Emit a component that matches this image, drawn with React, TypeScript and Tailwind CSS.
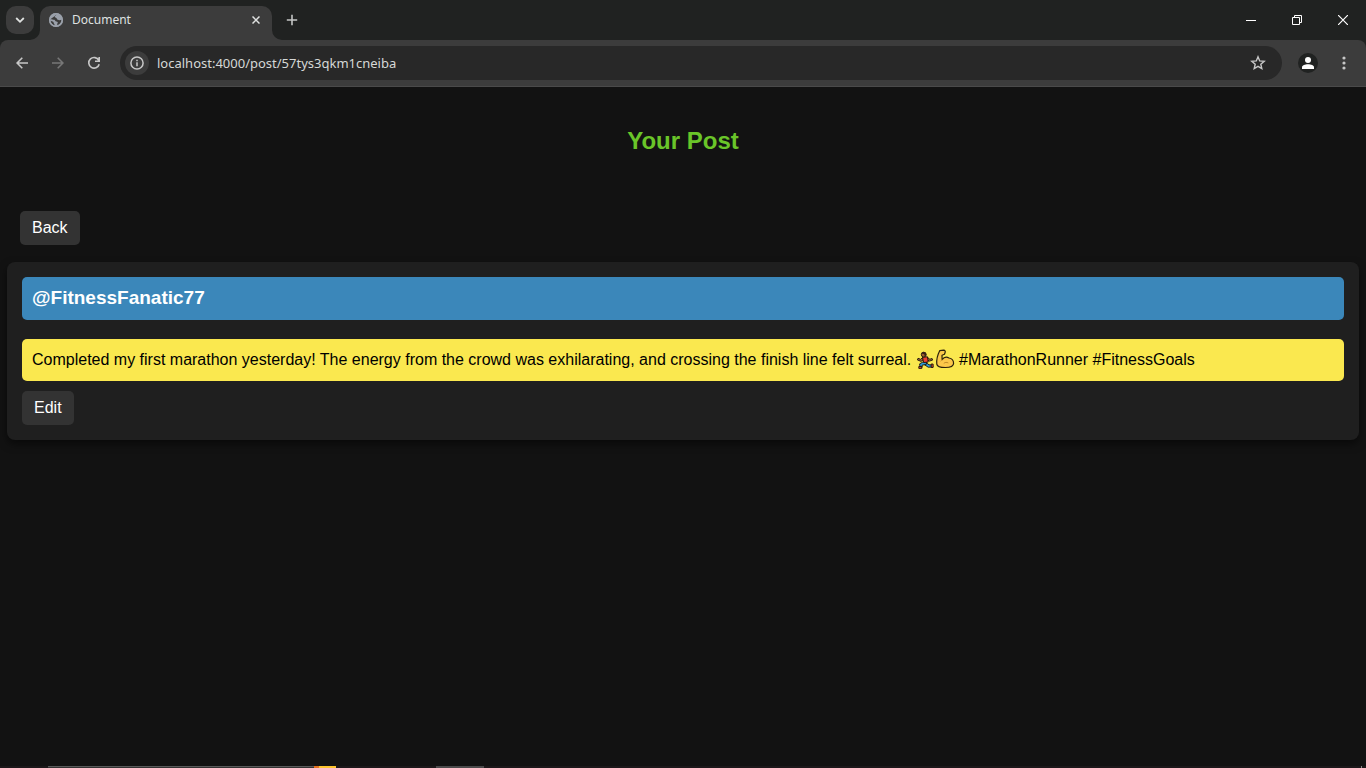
import React from "react";

function TabStrip() {
  return (
    <header className="flex h-10 items-start bg-[#202221] text-[#dfe1e0]">
      <button aria-label="Search tabs" className="ml-1.5 mt-1.5 flex size-7 items-center justify-center rounded-[10px] bg-[#3c3c3c]">
        <svg width="10" height="8" viewBox="0 0 10 8" fill="none" stroke="currentColor" strokeWidth="1.8">
          <path d="M1.2 2l3.8 3.8L8.8 2" />
        </svg>
      </button>
      <div className="flex h-10 items-start pl-1.5">
        <div className="relative flex h-[34px] w-[232px] items-center self-end rounded-t-[10px] bg-[#3c3c3c] pl-2 pr-2.5 pb-1.5">
          <svg className="absolute -left-2.5 bottom-0" width="10" height="10" viewBox="0 0 10 10">
            <path d="M10 0v10H0A10 10 0 0 0 10 0z" fill="#3c3c3c" />
          </svg>
          <svg className="absolute -right-2.5 bottom-0" width="10" height="10" viewBox="0 0 10 10">
            <path d="M0 0v10h10A10 10 0 0 1 0 0z" fill="#3c3c3c" />
          </svg>
          <svg width="16" height="16" viewBox="0 0 16 16">
            <circle cx="8" cy="8" r="7" fill="#9aa0aa" />
            <path
              d="M9 2.600C6.800 3.200 6.300 4.800 7.300 5.600c1 .7 1.300.4 1.600 1.400.4 1 1.600.8 2.300 1.200l2.400-.4c-.1 2.600-1.900 4.600-4 5.400-.8-.8-.4-1.600.1-2.200.4-.8-.3-1.300-1.300-1.500-1.300-.2-1.300-1.400-2.200-1.700C5 7.400 4 7.600 2.500 7.200l-.1 1.500c.9.6 2 .3 2.800 1 .6.6.4 1.300.9 2l.9 1.900A5.800 5.800 0 0 1 2.300 7.200z"
              fill="#3c3c3c"
            />
            <circle cx="8" cy="8" r="6.300" fill="none" stroke="#9aa0aa" strokeWidth="1.400" />
          </svg>
          <span className="ml-2 flex-1 font-['Noto_Sans',sans-serif] text-[12px] leading-4">Document</span>
          <button aria-label="Close tab" className="flex size-3 items-center justify-center">
            <svg width="8" height="8" viewBox="0 0 8 8" stroke="currentColor" strokeWidth="1.500">
              <path d="M.5.5l7 7M7.500.5l-7 7" />
            </svg>
          </button>
        </div>
        <button aria-label="New tab" className="ml-3.5 mt-3.5 flex size-3 items-center justify-center text-[#c4c6c5]">
          <svg width="12" height="12" viewBox="0 0 12 12" stroke="currentColor" strokeWidth="1.600">
            <path d="M6 .8v10.400M.8 6h10.400" />
          </svg>
        </button>
      </div>
      <div className="ml-auto flex text-white">
        <button aria-label="Minimize" className="flex h-10 w-[46px] items-center justify-center">
          <svg width="10" height="10" viewBox="0 0 10 10" stroke="currentColor">
            <path d="M0 5.500h10" />
          </svg>
        </button>
        <button aria-label="Restore" className="flex h-10 w-[46px] items-center justify-center">
          <svg width="10" height="10" viewBox="0 0 10 10" fill="none" stroke="currentColor">
            <path d="M.5 2.500h7v7h-7zM2.500 2.500v-2h7v7h-2" />
          </svg>
        </button>
        <button aria-label="Close" className="flex h-10 w-[46px] items-center justify-center">
          <svg width="10" height="10" viewBox="0 0 10 10" stroke="currentColor" strokeWidth="1.200">
            <path d="M0 0l10 10M10 0L0 10" />
          </svg>
        </button>
      </div>
    </header>
  );
}

function Toolbar() {
  return (
    <div className="bg-[#202221]">
      <nav className="flex h-[47px] items-center rounded-t-lg border-b border-[#4a4a4a] bg-[#3c3c3c] px-4 text-[#c7c7c7]">
        <button aria-label="Back" className="flex size-3 items-center justify-center">
          <svg width="12" height="12" viewBox="0 0 12 12" fill="none" stroke="currentColor" strokeWidth="1.600">
            <path d="M12 6H1.200M6.300.8L1.100 6l5.200 5.200" />
          </svg>
        </button>
        <button aria-label="Forward" className="ml-6 flex size-3 items-center justify-center text-[#777]">
          <svg width="12" height="12" viewBox="0 0 12 12" fill="none" stroke="currentColor" strokeWidth="1.600">
            <path d="M0 6h10.800M5.700.8L10.900 6l-5.200 5.200" />
          </svg>
        </button>
        <button aria-label="Reload" className="ml-[22px] flex size-4 items-center justify-center">
          <svg width="16" height="16" viewBox="0 0 16 16" fill="none" stroke="currentColor" strokeWidth="1.600">
            <path d="M12.800 5.400A5.300 5.300 0 1 0 13.200 9.200M13.200 2v4.200H9" />
          </svg>
        </button>
        <div className="ml-[18px] flex h-[34px] flex-1 items-center rounded-full bg-[#282828] pl-[5px] pr-4">
          <button aria-label="View site information" className="flex size-6 items-center justify-center rounded-full bg-[#3c3c3c]">
            <svg width="14" height="14" viewBox="0 0 14 14" fill="none" stroke="currentColor">
              <circle cx="7" cy="7" r="6.100" strokeWidth="1.500" />
              <path d="M7 6.200V10.200M7 3.700v1.500" strokeWidth="1.500" />
            </svg>
          </button>
          <input
            aria-label="Address"
            defaultValue="localhost:4000/post/57tys3qkm1cneiba"
            className="ml-2 min-w-0 flex-1 bg-transparent font-['Noto_Sans',sans-serif] text-[13px] leading-5 text-[#d6d8d7] outline-none"
          />
          <button aria-label="Bookmark this tab" className="flex size-4 items-center justify-center">
            <svg width="16" height="16" viewBox="0 0 16 16" fill="none" stroke="currentColor" strokeWidth="1.400">
              <path d="M8 1.800l1.700 4.100 4.500.4-3.400 2.900 1 4.400L8 11.300l-3.800 2.300 1-4.400-3.400-2.900 4.500-.4z" />
            </svg>
          </button>
        </div>
        <button aria-label="Profile" className="ml-4 flex size-5 items-center justify-center rounded-full bg-[#202221] text-white">
          <svg width="12" height="12" viewBox="0 0 12 12" fill="currentColor">
            <circle cx="6" cy="3" r="3" />
            <path d="M0 12V10.200C0 8.200 3 7.200 6 7.200s6 1 6 3V12z" />
          </svg>
        </button>
        <button aria-label="Menu" className="ml-5 flex h-4 w-3 items-center justify-center">
          <svg width="4" height="14" viewBox="0 0 4 14" fill="currentColor">
            <circle cx="2" cy="2" r="1.600" />
            <circle cx="2" cy="7" r="1.600" />
            <circle cx="2" cy="12" r="1.600" />
          </svg>
        </button>
      </nav>
    </div>
  );
}

function Runner() {
  return (
    <svg role="img" aria-label="Runner" className="mr-px inline-block align-[-4px]" width="18" height="18" viewBox="0 0 18 18" stroke="#17120c" strokeWidth="0.900" strokeLinejoin="round">
      <path d="M10 11.500l3 2.300 3.600.2.300 2-4.700.2-4-2.700z" fill="#2f9bd8" />
      <path d="M10.800 10.600l-3.900.4-3.300 1.900.5 3.300 2 .1.100-2.200 4-.6z" fill="#2f9bd8" />
      <path d="M2.800 15.500h3v1.900h-3zM15.200 13h1.900v3.500h-1.900z" fill="#e8502f" />
      <path d="M6.500 6.600L4.700 8.300 2 7.300l-.6 1.600 3.600 1.500 2.400-1.700z" fill="#a86a3c" />
      <path d="M11.200 6.200l2.600 2 2.300-.7.500 1.600-3.200 1-2.700-1.600z" fill="#a86a3c" />
      <path d="M6.500 6.200l5-.4.700 5.300-4.600.4z" fill="#ee412f" />
      <circle cx="7.700" cy="3.600" r="2.400" fill="#a0602f" />
      <path d="M5.400 2.500C6.500.2 11 .7 10.400 4.600L8.700 5 8.200 3.200z" fill="#3b2417" stroke="none" />
    </svg>
  );
}

function Biceps() {
  return (
    <svg role="img" aria-label="Flexed biceps" className="inline-block align-[-4px]" width="20" height="20" viewBox="0 0 20 20" stroke="#2b210b" strokeWidth="1.200" strokeLinejoin="round" strokeLinecap="round">
      <path
        d="M4.800 1.600L8.600 1.200c1.600.1 1.900 1.300 1.500 2.300L9.500 5.300 7 6.200 7.100 10.600c1.800-2.400 4.700-2.800 6.900-1.600 2.500.5 4.600 2.600 4.600 5.200 0 2.700-2.900 4.300-8.300 4.300-4.800 0-8.100-.8-8.500-3.400C1.300 10.800 3 5.200 4.800 1.600z"
        fill="#fcc84a"
      />
      <path d="M7.100 10.600l-1.200 1.200M13 13.800c-1.400-.8-3-.5-3.900.3" fill="none" stroke="#b98525" strokeWidth="0.900" />
    </svg>
  );
}

function DesktopEdge() {
  return (
    <div aria-hidden="true" className="flex h-0.5 bg-[#1c181a]">
      <div className="ml-12 w-[266px] border-t border-[#5a5a5a] bg-[#333]" />
      <div className="w-[5px] bg-[#e2701e]" />
      <div className="w-[17px] bg-[#fdc52f]" />
      <div className="ml-[100px] w-12 bg-[#4b4a4b]" />
      <div className="ml-auto mr-1 w-px bg-[#8a8a8a]" />
    </div>
  );
}

export default function App() {
  return (
    <div className="flex min-h-screen flex-col bg-[#121212] font-['Liberation_Sans',Arial,sans-serif]">
      <TabStrip />
      <Toolbar />
      <main className="flex-1">
        <h1 className="pt-10 text-center text-2xl leading-7 font-bold text-[#6ac529]">Your Post</h1>
        <a href="#back" className="mt-14 ml-5 inline-block rounded-[5px] bg-[#333] px-3 py-2 text-base leading-[18px] text-white">
          Back
        </a>
        <article className="mx-[7px] mt-[17px] rounded-lg bg-[#1f1f1f] p-[15px] shadow-[0_4px_8px_rgba(0,0,0,0.5)]">
          <h2 className="rounded-[5px] bg-[#3b87ba] px-2.5 pt-[9px] pb-[11px] text-[19px] leading-[23px] font-bold text-white">@FitnessFanatic77</h2>
          <p className="mt-[19px] rounded-[5px] bg-[#fae84f] p-2.5 text-base leading-[22px] text-black">
            Completed my first marathon yesterday! The energy from the crowd was exhilarating, and crossing the finish line felt surreal. <Runner />
            <Biceps /> #MarathonRunner #FitnessGoals
          </p>
          <a href="#edit" className="mt-2.5 block w-fit rounded-[5px] bg-[#333] px-3 py-2 text-base leading-[18px] text-white">
            Edit
          </a>
        </article>
      </main>
      <DesktopEdge />
    </div>
  );
}
